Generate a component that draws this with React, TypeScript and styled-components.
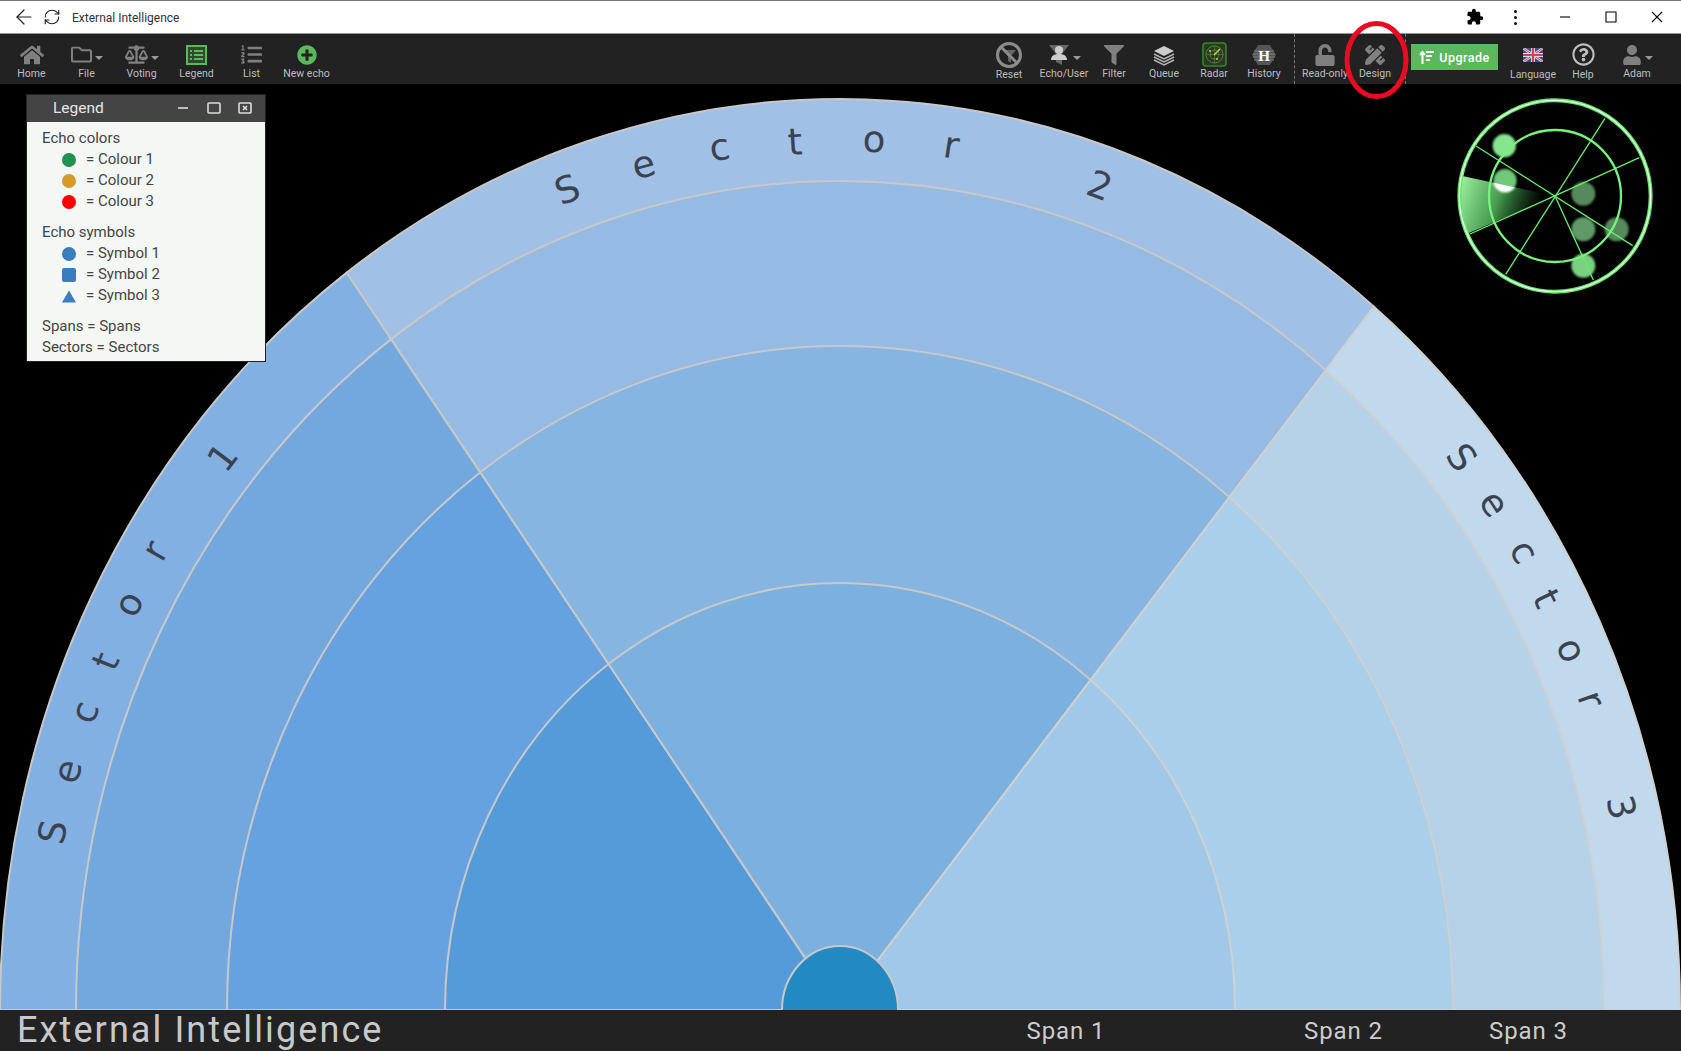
import React from 'react';
import styled, {createGlobalStyle} from 'styled-components';
import {ArrowLeft, RefreshCw} from 'lucide-react';
import {FaBalanceScale, FaFilter, FaHome, FaListOl, FaPencilRuler, FaPlusCircle, FaRegFolder, FaRegQuestionCircle, FaUnlock, FaUser} from 'react-icons/fa';
import {MdExtension} from 'react-icons/md';

const GlobalStyle = createGlobalStyle`
    html, body {
        margin: 0;
        padding: 0;
        background: #000;
    }
    * {
        box-sizing: border-box;
    }
`

const Window = styled.div`
    width: 1681px;
    height: 1051px;
    display: flex;
    flex-direction: column;
    position: relative;
    overflow: hidden;
    font-family: Roboto, "Liberation Sans", sans-serif;
`

const TitleBar = styled.header`
    height: 34px;
    flex: none;
    display: flex;
    align-items: center;
    background: #fff;
    border-top: 1px solid #777;
    border-bottom: 1px solid #999;
    color: #222;
`

const TitleIcon = styled.span<{ $ml?: number }>`
    display: flex;
    margin-left: ${p => p.$ml ?? 0}px;
`

const TitleText = styled.span`
    margin: 1px 0 0 11px;
    font-size: 12px;
    color: #333;
`

const TitleRight = styled.div`
    margin-left: auto;
    display: flex;
    align-items: center;
    height: 100%;
`

const ChromeButton = styled.span<{ $w: number }>`
    width: ${p => p.$w}px;
    height: 100%;
    display: flex;
    align-items: center;
    justify-content: center;
    color: #000;
`

const Dots = styled.span`
    display: flex;
    flex-direction: column;
    gap: 3px;

    i {
        width: 3px;
        height: 3px;
        border-radius: 50%;
        background: #111;
    }
`

const Toolbar = styled.nav`
    height: 50px;
    flex: none;
    display: flex;
    align-items: stretch;
    background: #222;
    padding: 0 19px 0 4px;
`

const ToolGroup = styled.div<{ $right?: boolean }>`
    display: flex;
    align-items: stretch;
    margin-left: ${p => (p.$right ? 'auto' : '0')};
`

const ToolItem = styled.div<{ $w?: number; $ml?: number }>`
    width: ${p => p.$w ?? 50}px;
    margin-left: ${p => p.$ml ?? 0}px;
    display: flex;
    flex-direction: column;
    align-items: center;
    color: #808080;
`

const ToolIcon = styled.div<{ $shift?: boolean }>`
    height: 33px;
    padding-top: 8px;
    padding-right: ${p => (p.$shift ? 10 : 0)}px;
    display: flex;
    align-items: center;
    justify-content: center;
    position: relative;
`

const ToolLabel = styled.span<{ $low?: boolean }>`
    margin-top: ${p => (p.$low ? 1 : 0)}px;
    font-size: 10.5px;
    line-height: 13px;
    color: #bdbdbd;
    white-space: nowrap;
`

const Caret = styled.i`
    position: absolute;
    right: -1px;
    top: 22px;
    border-left: 4px solid transparent;
    border-right: 4px solid transparent;
    border-top: 4px solid #999;
`

const Dashed = styled.div<{ $ml?: number; $mr?: number }>`
    width: 0;
    margin-left: ${p => p.$ml ?? 0}px;
    margin-right: ${p => p.$mr ?? 0}px;
    border-left: 1px dashed #777;
`

const UpgradeButton = styled.div`
    width: 87px;
    height: 26px;
    margin-top: 10px;
    margin-right: 10px;
    display: flex;
    align-items: center;
    justify-content: center;
    gap: 5px;
    background: #5cb85c;
    color: #fff;
    font-size: 12.5px;
    font-weight: 500;
    letter-spacing: 0.5px;
`

const Canvas = styled.main`
    position: relative;
    flex: 1;
    background: #000;
    overflow: hidden;
`

const ChartSvg = styled.svg`
    display: block;
`

const LegendPanel = styled.aside`
    position: absolute;
    left: 26px;
    top: 10px;
    width: 240px;
    height: 268px;
    background: #f5f7f4;
    border: 1px solid #222;
    color: #444;
    font-size: 15px;
`

const LegendHeader = styled.div`
    height: 27px;
    display: flex;
    align-items: center;
    padding: 0 0 1px 26px;
    background: #444;
    color: #e6e6e6;
    font-size: 15.5px;
`

const LegendButtons = styled.div`
    margin-left: auto;
    display: flex;
    align-items: center;
    gap: 17px;
    padding-right: 13px;
`

const LegendBody = styled.div`
    padding: 6px 0 0 15px;
`

const LegendGroup = styled.div`
    margin-bottom: 10px;
`

const LegendRow = styled.div`
    height: 21px;
    line-height: 21px;
`

const LastRow = styled(LegendRow)`
    height: 20px;
    line-height: 20px;
`

const SwatchRow = styled(LegendRow)`
    display: flex;
    align-items: center;
    padding-left: 20px;
`

const SwatchBox = styled.span`
    width: 14px;
    height: 14px;
    margin-right: 10px;
    display: flex;
`

const Dot = styled.i<{ $c: string; $r?: string }>`
    display: block;
    width: 14px;
    height: 14px;
    background: ${p => p.$c};
    border-radius: ${p => p.$r ?? '50%'};
`

const RadarBox = styled.svg`
    position: absolute;
    right: 0;
    top: 6px;
`

const RedMark = styled.svg`
    position: absolute;
    left: 1342px;
    top: 19px;
    pointer-events: none;
`

const Footer = styled.footer`
    height: 41px;
    flex: none;
    display: grid;
    grid-template-columns: 898px 336px 219px 151px 77px;
    align-items: center;
    background: #222;
    color: #ccc;
`

const FooterTitle = styled.div`
    padding-left: 17px;
    font-size: 36px;
    line-height: 41px;
    letter-spacing: 2.1px;
    color: #c8c8c8;
    white-space: nowrap;
`

const SpanLabel = styled.div`
    text-align: center;
    font-size: 24px;
    letter-spacing: 0.9px;
`

const CX = 840
const CY = 926

const rings = [
    {rx: 840, ry: 911, fills: ['#83b0e3', '#a0c0e6', '#c1d9ed']},
    {rx: 764, ry: 829, fills: ['#72a8de', '#95bae3', '#b5d2e9']},
    {rx: 613, ry: 664, fills: ['#65a2df', '#85b5e0', '#aacfea']},
    {rx: 395, ry: 427, fills: ['#559bda', '#7bb0df', '#a0c8e9']},
]

const onEllipse = (rx: number, ry: number, dx: number, dy: number) => {
    const t = 1 / Math.sqrt((dx * dx) / (rx * rx) + (dy * dy) / (ry * ry))
    return [CX + dx * t, CY + dy * t]
}

const wedge = (rx: number, ry: number, a: number[], b: number[]) => {
    const p = onEllipse(rx, ry, a[0], a[1])
    const q = onEllipse(rx, ry, b[0], b[1])
    return `M${CX} ${CY} L${p[0]} ${p[1]} A${rx} ${ry} 0 0 1 ${q[0]} ${q[1]} Z`
}

const rays = [[-1, 0], [-493, -737], [533, -702], [1, 0]]

// letter centres in page coordinates, measured along the outer band
const letters: [string, number, number][] = [
    ['S', 52, 832], ['e', 70, 772], ['c', 87, 713], ['t', 105, 661], ['o', 131, 605], ['r', 157, 552], ['1', 222, 457],
    ['S', 567, 189], ['e', 644, 167], ['c', 720, 150], ['t', 795, 141], ['o', 874, 142], ['r', 951, 148], ['2', 1100, 185],
    ['S', 1462, 457], ['e', 1492, 505], ['c', 1522, 553], ['t', 1547, 598], ['o', 1569, 651], ['r', 1589, 700], ['3', 1622, 807],
]

const Chart = () => (
    <ChartSvg width={1681} height={926} viewBox="0 0 1681 926">
        {rings.map(r => r.fills.map((fill, i) => (
            <path key={r.rx + fill} d={wedge(r.rx, r.ry, rays[i], rays[i + 1])} fill={fill} stroke={i === 2 ? '#cfd0cf' : '#c8c8c8'} strokeWidth={2}/>
        )))}
        <ellipse cx={CX} cy={CY} rx={58} ry={64} fill="#2389c2" stroke="#c8c8c8" strokeWidth={2}/>
        {letters.map(([ch, x, py], i) => {
            const y = py - 84
            const u = (x - CX) / 802
            const v = (CY - y) / 870
            const angle = Math.atan2(1.086 * u, v) * 180 / Math.PI
            const drop = /[a-z]/.test(ch) && ch !== 't' ? 10 : 13.5
            return (
                <text key={i} transform={`translate(${x} ${y}) rotate(${angle})`} y={drop} textAnchor="middle"
                      fontFamily="'DejaVu Sans', sans-serif" fontSize={37} fill="#3b4350">{ch}</text>
            )
        })}
    </ChartSvg>
)

const Radar = () => {
    const spokes = [[495, 85, 197, 553], [598, 203, 90, 432], [108, 168, 578, 467], [345, 318, 460, 570]]
    const wedgePts = '345,318 30,250 30,453'
    return (
        <RadarBox width={241} height={220} viewBox="0 0 723 660">
            <defs>
                <linearGradient id="sweep" x1="60" y1="265" x2="300" y2="350" gradientUnits="userSpaceOnUse">
                    <stop offset="0" stopColor="#a4f5a4" stopOpacity={0.98}/>
                    <stop offset="0.5" stopColor="#4fae5a" stopOpacity={0.9}/>
                    <stop offset="1" stopColor="#2c7a38" stopOpacity={0}/>
                </linearGradient>
                <filter id="soft"><feGaussianBlur stdDeviation="3"/></filter>
                <clipPath id="sweepClip"><polygon points={wedgePts}/></clipPath>
                <clipPath id="dial"><circle cx={345} cy={318} r={288}/></clipPath>
            </defs>
            <g filter="url(#soft)">
                <circle cx={193} cy={167} r={35} fill="#86e68f"/>
                <circle cx={195} cy={272} r={35} fill="#6fc97a"/>
                <circle cx={430} cy={311} r={36} fill="#568a5c"/>
                <circle cx={430} cy={418} r={36} fill="#5f9a66"/>
                <circle cx={530} cy={418} r={36} fill="#568a5c"/>
                <circle cx={430} cy={527} r={36} fill="#78d282"/>
            </g>
            <g clipPath="url(#dial)">
                <polygon points={wedgePts} fill="url(#sweep)"/>
            </g>
            <g clipPath="url(#sweepClip)">
                <circle cx={195} cy={272} r={35} fill="#fff" filter="url(#soft)"/>
            </g>
            {spokes.map(s => <line key={s[0]} x1={s[0]} y1={s[1]} x2={s[2]} y2={s[3]} stroke="#6bea6e" strokeWidth={4}/>)}
            <circle cx={345} cy={318} r={198} fill="none" stroke="#7af07f" strokeWidth={7}/>
            <circle cx={345} cy={318} r={287} fill="none" stroke="#62e568" strokeWidth={12}/>
            <circle cx={345} cy={318} r={287} fill="none" stroke="#f0fff0" strokeWidth={4}/>
        </RadarBox>
    )
}

const LegendListIcon = () => (
    <svg width="21" height="20" viewBox="0 0 21 20" fill="none" stroke="#5cb85c">
        <rect x="1" y="1" width="19" height="18" strokeWidth="2" fill="#2d4a2d"/>
        <path d="M4 6h2M4 10h2M4 14h2M8 6h9M8 10h9M8 14h9" strokeWidth="2"/>
    </svg>
)

const ResetIcon = () => (
    <svg width="28" height="28" viewBox="0 0 28 28">
        <path d="M8 9h13l-5 6v7l-3-2v-5z" fill="#666"/>
        <circle cx="14" cy="14" r="11.5" fill="none" stroke="#8c8c8c" strokeWidth="3"/>
        <path d="M6 6l16 16" stroke="#8c8c8c" strokeWidth="3"/>
    </svg>
)

const EchoUserIcon = () => (
    <svg width="22" height="22" viewBox="0 0 22 22">
        <path d="M1 1h20l-7 9v11l-6-3v-8z" fill="#666"/>
        <circle cx="11" cy="6" r="4" fill="#ccc"/>
        <path d="M3 16c0-4 3-6 8-6s8 2 8 6z" fill="#ccc"/>
    </svg>
)

const QueueIcon = () => (
    <svg width="24" height="22" viewBox="0 0 24 22" fill="none" stroke="#b5b5b5">
        <path d="M12 2l10 5-10 5L2 7z" fill="#ccc" stroke="none"/>
        <path d="M2 10l10 5 10-5M2 13l10 5 10-5M2 16l10 5 10-5" strokeWidth="1.4"/>
    </svg>
)

const RadarToolIcon = () => (
    <svg width="25" height="25" viewBox="0 0 25 25" fill="none">
        <rect x="1" y="1" width="23" height="23" rx="3" fill="#2a3a22" stroke="#2f8a1e" strokeWidth="1.6"/>
        <circle cx="12.5" cy="12.5" r="8.5" stroke="#5e7a3a"/>
        <circle cx="12.5" cy="12.5" r="4.5" stroke="#5e7a3a"/>
        <path d="M4 12.5h17M12.5 4v17" stroke="#5e7a3a" strokeWidth="0.7"/>
        <path d="M12 13l6-6" stroke="#b5d93a" strokeWidth="1.6"/>
        <circle cx="8" cy="9" r="1" fill="#b5d93a"/>
        <circle cx="15" cy="17" r="1" fill="#b5d93a"/>
    </svg>
)

const HistoryIcon = () => (
    <svg width="24" height="22" viewBox="0 0 24 22">
        <path d="M6 1h12l6 10-6 10H6L0 11z" fill="#555"/>
        <path d="M2 7h20M1 10h22M1 13h22M2 16h20" stroke="#888" strokeWidth="0.8"/>
        <text x="12" y="16.5" textAnchor="middle" fontFamily="'Liberation Serif', serif" fontWeight="700" fontSize="15" fill="#fff">H</text>
    </svg>
)

const FlagIcon = () => (
    <svg width="20" height="14" viewBox="0 0 20 14">
        <rect width="20" height="14" fill="#3f4f8c"/>
        <path d="M0 0l20 14M20 0L0 14" stroke="#d9d9e0" strokeWidth="2.6"/>
        <path d="M0 0l20 14M20 0L0 14" stroke="#c2485a" strokeWidth="1"/>
        <path d="M10 0v14M0 7h20" stroke="#d9d9e0" strokeWidth="4"/>
        <path d="M10 0v14M0 7h20" stroke="#c2485a" strokeWidth="2.2"/>
    </svg>
)

const UpgradeIcon = () => (
    <svg width="15" height="14" viewBox="0 0 15 14" fill="none" stroke="#fff" strokeWidth="2">
        <path d="M3.5 14V2M1 5l2.5-3L6 5"/>
        <path d="M7 2h8M7 6h6M7 10h4"/>
    </svg>
)

const WinIcon = ({d}: { d: string }) => (
    <svg width="12" height="12" viewBox="0 0 12 12" fill="none" stroke="#000" strokeWidth="1.1"><path d={d}/></svg>
)

const PanelIcon = ({d, box}: { d: string; box?: boolean }) => (
    <svg width="14" height="14" viewBox="0 0 14 14" fill="none" stroke="#ddd" strokeWidth="1.6">
        {box && <rect x="1" y="2" width="12" height="10" rx="1"/>}
        <path d={d}/>
    </svg>
)

type ToolProps = { label: string; w?: number; ml?: number; caret?: boolean; low?: boolean; children: React.ReactNode }

const Tool = ({label, w, ml, caret, low, children}: ToolProps) => (
    <ToolItem $w={w} $ml={ml}>
        <ToolIcon $shift={caret}>
            {children}
            {caret && <Caret/>}
        </ToolIcon>
        <ToolLabel $low={low}>{label}</ToolLabel>
    </ToolItem>
)

const colourRows = [['Colour 1', '#1f9150'], ['Colour 2', '#d69a28'], ['Colour 3', '#ff0000']]

export default function App() {
    return (
        <Window>
            <GlobalStyle/>
            <TitleBar>
                <TitleIcon $ml={12}><ArrowLeft size={24} strokeWidth={1.2}/></TitleIcon>
                <TitleIcon $ml={7}><RefreshCw size={18} strokeWidth={1.5}/></TitleIcon>
                <TitleText>External Intelligence</TitleText>
                <TitleRight>
                    <ChromeButton $w={40}><MdExtension size={18}/></ChromeButton>
                    <ChromeButton $w={40}><Dots><i/><i/><i/></Dots></ChromeButton>
                    <ChromeButton $w={7}/>
                    <ChromeButton $w={46}><WinIcon d="M1 6h10"/></ChromeButton>
                    <ChromeButton $w={46}><WinIcon d="M1 1h10v10H1z"/></ChromeButton>
                    <ChromeButton $w={46}><WinIcon d="M1 1l10 10M11 1L1 11"/></ChromeButton>
                    <ChromeButton $w={1}/>
                </TitleRight>
            </TitleBar>
            <Toolbar>
                <ToolGroup>
                    <Tool label="Home" w={55}><FaHome size={24}/></Tool>
                    <Tool label="File" w={55} caret><FaRegFolder size={21}/></Tool>
                    <Tool label="Voting" w={55} caret><FaBalanceScale size={23}/></Tool>
                    <Tool label="Legend" w={55}><LegendListIcon/></Tool>
                    <Tool label="List" w={55}><FaListOl size={21}/></Tool>
                    <Tool label="New echo" w={55}><FaPlusCircle size={20} color="#5cb85c"/></Tool>
                </ToolGroup>
                <ToolGroup $right>
                    <Tool label="Reset" low><ResetIcon/></Tool>
                    <Tool label="Echo/User" ml={5} caret><EchoUserIcon/></Tool>
                    <Tool label="Filter"><FaFilter size={20}/></Tool>
                    <Tool label="Queue"><QueueIcon/></Tool>
                    <Tool label="Radar"><RadarToolIcon/></Tool>
                    <Tool label="History"><HistoryIcon/></Tool>
                    <Dashed $ml={5} $mr={5}/>
                    <Tool label="Read-only"><FaUnlock size={22}/></Tool>
                    <Tool label="Design"><FaPencilRuler size={20}/></Tool>
                    <Dashed $ml={5} $mr={5}/>
                    <UpgradeButton><UpgradeIcon/>Upgrade</UpgradeButton>
                    <Tool label="Language" low><FlagIcon/></Tool>
                    <Tool label="Help" low><FaRegQuestionCircle size={23} color="#bdbdbd"/></Tool>
                    <Tool label="Adam" ml={4} caret><FaUser size={20}/></Tool>
                </ToolGroup>
            </Toolbar>
            <Canvas>
                <Chart/>
                <LegendPanel>
                    <LegendHeader>
                        Legend
                        <LegendButtons>
                            <PanelIcon d="M2 7h10"/>
                            <PanelIcon d="" box/>
                            <PanelIcon d="M5 5l4 4M9 5l-4 4" box/>
                        </LegendButtons>
                    </LegendHeader>
                    <LegendBody>
                        <LegendGroup>
                            <LegendRow>Echo colors</LegendRow>
                            {colourRows.map(([name, c]) => (
                                <SwatchRow key={name}><SwatchBox><Dot $c={c}/></SwatchBox>= {name}</SwatchRow>
                            ))}
                        </LegendGroup>
                        <LegendGroup>
                            <LegendRow>Echo symbols</LegendRow>
                            <SwatchRow><SwatchBox><Dot $c="#3a7cbd"/></SwatchBox>= Symbol 1</SwatchRow>
                            <SwatchRow><SwatchBox><Dot $c="#3a7cbd" $r="2px"/></SwatchBox>= Symbol 2</SwatchRow>
                            <SwatchRow>
                                <SwatchBox>
                                    <svg width="15" height="15" viewBox="0 0 15 15"><path d="M7.5 1l7.5 13H0z" fill="#3a7cbd"/></svg>
                                </SwatchBox>
                                = Symbol 3
                            </SwatchRow>
                        </LegendGroup>
                        <LegendRow>Spans = Spans</LegendRow>
                        <LastRow>Sectors = Sectors</LastRow>
                    </LegendBody>
                </LegendPanel>
                <Radar/>
            </Canvas>
            <Footer>
                <FooterTitle>External Intelligence</FooterTitle>
                <SpanLabel>Span 1</SpanLabel>
                <SpanLabel>Span 2</SpanLabel>
                <SpanLabel>Span 3</SpanLabel>
            </Footer>
            <RedMark width={70} height={84} viewBox="0 0 70 84">
                <ellipse cx={34.5} cy={41} rx={29.5} ry={36.5} fill="none" stroke="#ea0a22" strokeWidth={5}/>
            </RedMark>
        </Window>
    );
}
